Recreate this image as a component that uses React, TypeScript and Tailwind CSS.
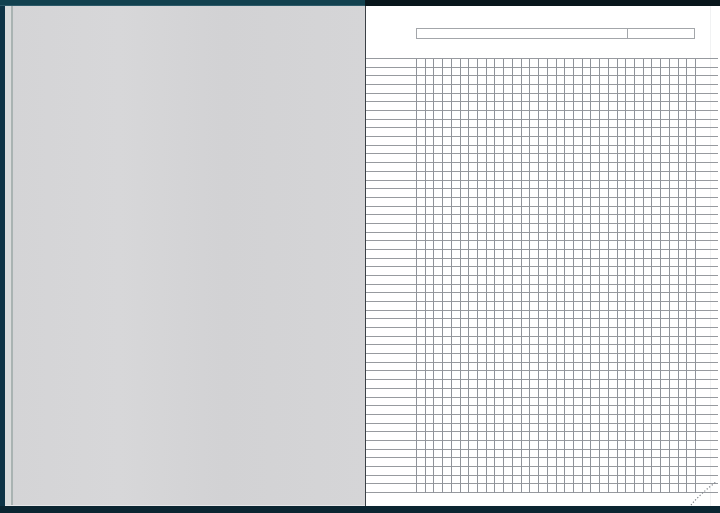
const ROWS = 50;
const COLS = 32;
const CELL = 8.68;
const GRID_X = 50;

function Ruling() {
  const h = ROWS * CELL + 1;
  const hLines = Array.from({ length: ROWS + 1 }, (_, i) => Math.round(i * CELL) + 0.5);
  const vLines = Array.from({ length: COLS + 1 }, (_, i) => Math.round(GRID_X + i * 8.72) + 0.5);
  return (
    <svg width={354} height={h} className="block" shapeRendering="crispEdges">
      {hLines.map((y, i) => (
        <line key={"h" + i} x1={0} x2={352} y1={y} y2={y} stroke="#979a9f" strokeWidth={1} />
      ))}
      {vLines.map((x, i) => (
        <line key={"v" + i} x1={x} x2={x} y1={hLines[0]} y2={hLines[ROWS]} stroke="#8f939a" strokeWidth={1} />
      ))}
    </svg>
  );
}

export default function App() {
  return (
    <div className="w-[720px] h-[513px] bg-[#0b2430] flex flex-col overflow-hidden">
      {/* top edge */}
      <div className="h-[6px] flex">
        <div className="w-[365px] bg-[#12414f] border-b border-[#2c5968]" />
        <div className="flex-1 bg-[#08161c]" />
      </div>

      <div className="flex-1 flex">
        {/* cover edge */}
        <div className="w-[5px] bg-[#0e3446]" />

        {/* left page */}
        <div className="w-[360px] flex border-b border-[#e6e6e8]">
          <div className="w-[6px] bg-[#d9dbdb]" />
          <div className="w-[2px] bg-[#a9b3b2]" />
          <div className="flex-1 bg-[linear-gradient(to_right,#d4d4d6,#d7d7d9_30%,#d2d2d4_60%,#d5d5d7)]" />
        </div>

        {/* spine */}
        <div className="w-[1px] bg-[#3b4046]" />

        {/* right page */}
        <div className="flex-1 bg-white relative flex flex-col pt-[22px]">
          <div className="absolute top-0 bottom-0 right-[9px] w-px bg-[#f1f2f3]" />

          <div className="ml-[50px] w-[279px] h-[11px] border border-[#a3a6aa] flex">
            <div className="w-[211px] border-r border-[#a3a6aa]" />
          </div>
          <div className="mt-[19px] relative">
            <Ruling />
          </div>

          {/* page-turn corner */}
          <svg className="absolute right-[2px] bottom-0" width={30} height={28}>
            <path
              d="M3 27 Q 13 15 28 4"
              fill="none"
              stroke="#7d8288"
              strokeWidth={1.2}
              strokeDasharray="1.2 2"
            />
          </svg>
        </div>
      </div>

      {/* bottom edge */}
      <div className="h-[7px] bg-[#0b2531]" />
    </div>
  );
}
